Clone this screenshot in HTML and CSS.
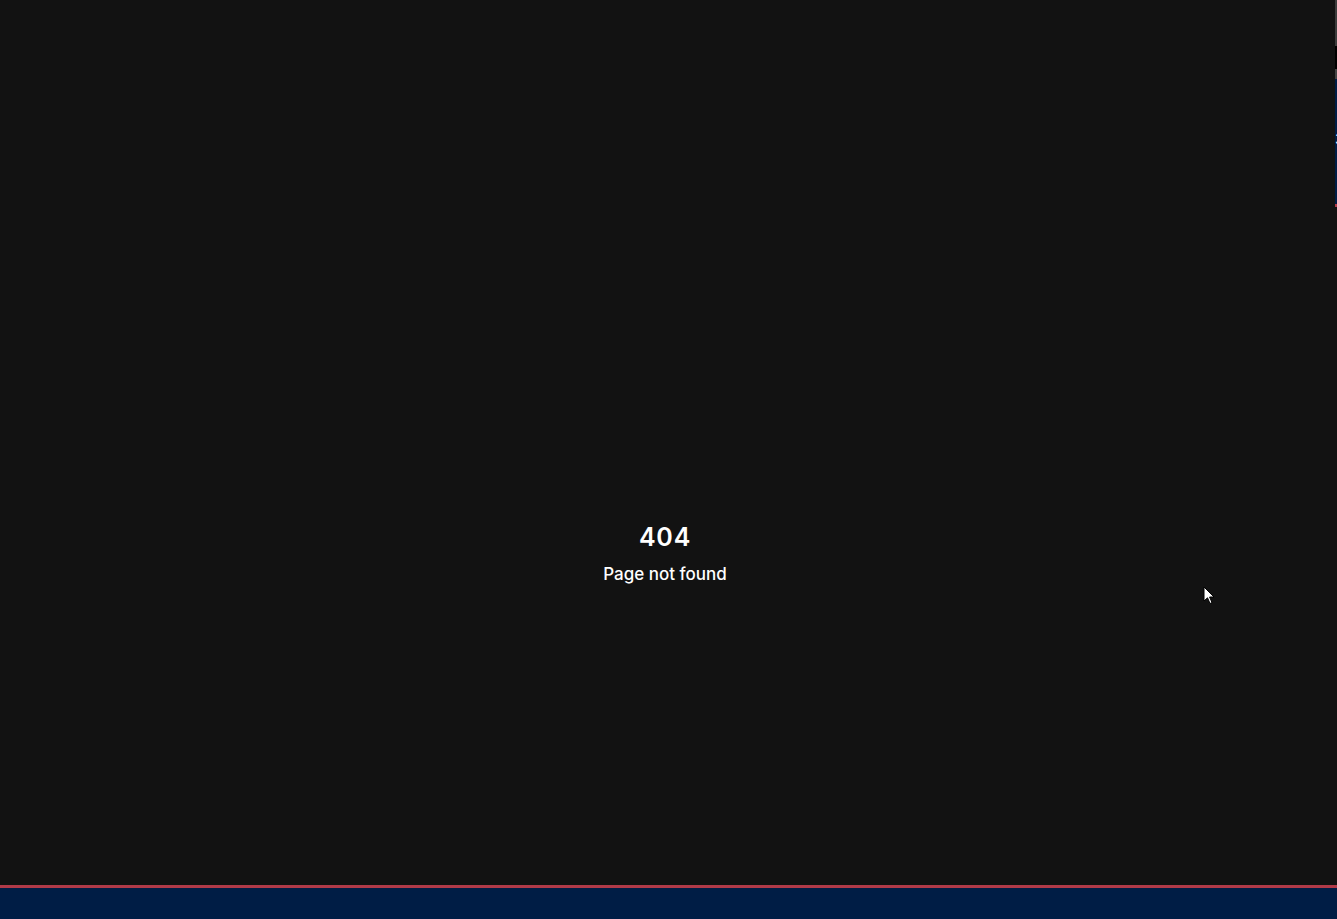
FILE: index.html
```html
<!DOCTYPE html>
<html lang="en">
<head>
<meta charset="utf-8">
<title>404 - Page not found</title>
<link rel="stylesheet" href="styles.css">
</head>
<body>
<div class="page">
  <main class="main">
    <div class="notfound">
      <h1 class="code">404</h1>
      <p class="msg">Page not found</p>
    </div>
  </main>
  <footer class="footer"></footer>
</div>
<aside class="side-widget">
  <div class="sw-top"></div>
  <div class="sw-black"></div>
  <div class="sw-grey"></div>
  <div class="sw-panel"><span class="sw-glyph">3</span></div>
  <div class="sw-red"></div>
</aside>
<svg class="cursor" width="14" height="20" viewBox="0 0 14 20" aria-hidden="true">
  <path d="M1 1 L1 15 L4.5 11.8 L7 17.5 L9 16.6 L6.6 11 L11 11 Z" fill="#fff" stroke="#000" stroke-width="1"/>
</svg>
</body>
</html>
```
FILE: styles.css
```css
html, body {
  margin: 0;
  padding: 0;
  height: 100%;
  background: #121212;
  overflow: hidden;
}
body {
  font-family: Inter, "Noto Sans", sans-serif;
  color: #ffffff;
}
.page {
  display: flex;
  flex-direction: column;
  height: 919px;
}
.main {
  flex: 1;
  display: flex;
  justify-content: center;
  align-items: flex-start;
  padding-top: 522px;
  padding-right: 7px;
  box-sizing: border-box;
}
.notfound {
  display: flex;
  flex-direction: column;
  align-items: center;
}
.code {
  margin: 0;
  font-size: 25px;
  line-height: 30px;
  font-weight: 600;
  letter-spacing: 0.8px;
}
.msg {
  margin: 12px 0 0;
  font-size: 17px;
  line-height: 21px;
  font-weight: 500;
  letter-spacing: 0;
}
.footer {
  height: 31px;
  background: #001d45;
  border-top: 3px solid #b03a48;
  flex: none;
}
.side-widget {
  position: absolute;
  top: 0;
  right: 0;
  width: 2px;
  display: flex;
  flex-direction: column;
  overflow: hidden;
}
.sw-top { height: 46px; background: #3d3d3d; }
.sw-black { height: 23px; background: #000; }
.sw-grey { height: 10px; background: #444; }
.sw-panel {
  height: 125px;
  background: #001d45;
  position: relative;
}
.sw-glyph {
  position: absolute;
  left: 0;
  top: 52px;
  font-size: 16px;
  line-height: 16px;
  color: #fff;
}
.sw-red { height: 3px; background: #b03a48; }
.cursor {
  position: absolute;
  left: 1203px;
  top: 586px;
}
```
